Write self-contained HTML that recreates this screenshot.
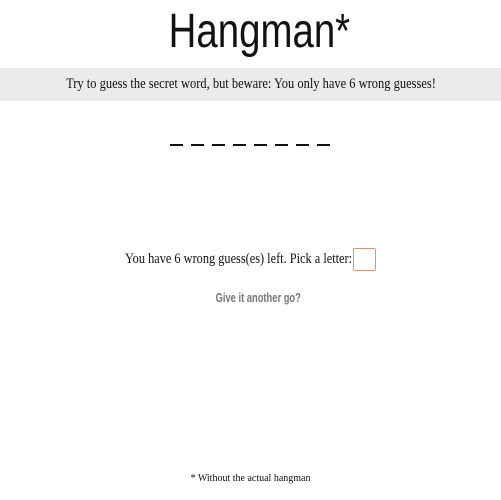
<html><head><style>
body{margin:0;width:501px;height:500px;background:#fff;position:relative;font-family:"Liberation Serif",serif;color:#111}
.a{position:absolute;left:0;width:501px;text-align:center;white-space:nowrap}
</style></head><body>
<div class="a" style="top:4px;left:9px;font-family:'Liberation Sans',sans-serif;font-size:48px;line-height:56px"><span style="display:inline-block;transform:scaleX(0.8)">Hangman*</span></div>
<div style="position:absolute;left:0;top:68px;width:501px;height:33px;background:#ebebeb"></div>
<div class="a" style="top:75px;font-size:14.5px;line-height:18px"><span style="display:inline-block;transform:scaleX(0.86)">Try to guess the secret word, but beware: You only have 6 wrong guesses!</span></div>
<div style="position:absolute;left:170px;top:144px;width:162px;height:2px;background:repeating-linear-gradient(90deg,#111 0 13px,transparent 13px 21px)"></div>
<div style="position:absolute;left:125px;top:250px;font-size:14.5px;line-height:18px;white-space:nowrap;transform:scaleX(0.85);transform-origin:0 0">You have 6 wrong guess(es) left. Pick a letter:</div>
<div style="position:absolute;left:353px;top:248px;width:21px;height:21px;border:1px solid #e8906a;border-radius:2px"></div>
<div class="a" style="top:289px;left:8px;font-family:'Liberation Sans',sans-serif;font-weight:bold;font-size:13px;color:#777;line-height:18px"><span style="display:inline-block;transform:scaleX(0.72)">Give it another go?</span></div>
<div class="a" style="top:473px;font-size:10px;line-height:12px">* Without the actual hangman</div>
</body></html>
